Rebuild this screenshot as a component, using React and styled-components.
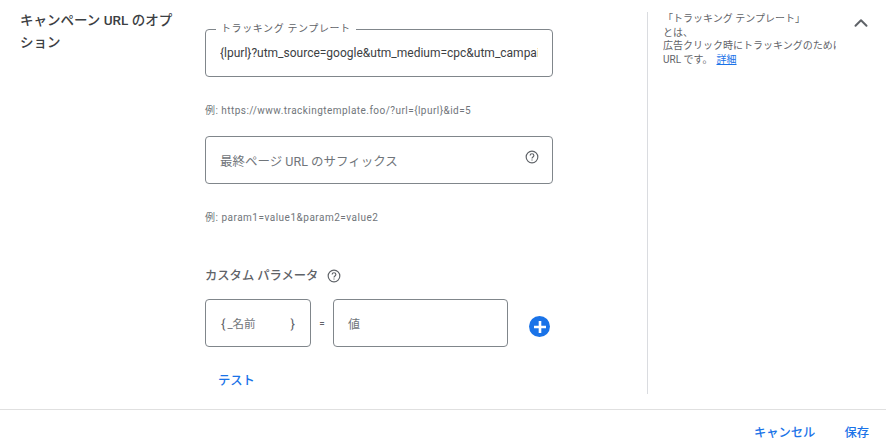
import React from "react";
import styled, { createGlobalStyle } from "styled-components";
import { ChevronUp } from "lucide-react";

const Global = createGlobalStyle`
  html, body { margin: 0; padding: 0; background: #fff; }
  body { font-family: Roboto, "Noto Sans CJK JP", sans-serif; color: #3c4043; }
`;

const Page = styled.div`
  width: 886px;
  height: 447px;
  overflow: hidden;
  display: flex;
  flex-direction: column;
  background: #fff;
`;

const Main = styled.main`
  height: 409px;
  display: grid;
  grid-template-columns: 205px 442px 1fr;
  box-sizing: border-box;
`;

const Title = styled.h2`
  margin: 0;
  padding: 9px 0 0 20px;
  font-size: 13.5px;
  line-height: 22px;
  font-weight: 500;
  color: #3c4043;
  width: 158px;
`;

const Form = styled.div`
  display: flex;
  flex-direction: column;
  padding-top: 29px;
  align-items: flex-start;
`;

const Field = styled.div`
  position: relative;
  box-sizing: border-box;
  width: ${p => p.$w || 348}px;
  height: 48px;
  border: 1px solid #80868b;
  border-radius: 4px;
  display: flex;
  align-items: center;
  padding: ${p => p.$pad || "0 14px"};
  font-size: ${p => p.$size || 12.5}px;
  color: ${p => (p.$muted ? "#70757a" : "#3c4043")};
  white-space: nowrap;
`;

const FloatLabel = styled.span`
  position: absolute;
  top: -8px;
  left: 10px;
  padding: 0 5px;
  background: #fff;
  font-size: 10px;
  line-height: 14px;
  color: #5f6368;
  letter-spacing: 0.6px;
`;

const Clip = styled.span`
  display: block;
  overflow: hidden;
  width: 100%;
`;

const Hint = styled.div`
  font-size: ${p => p.$size}px;
  letter-spacing: ${p => p.$spacing}px;
  line-height: 14px;
  color: #70757a;
  margin-top: 27px;
  margin-bottom: ${p => p.$bottom || 0}px;
`;

const HelpIcon = styled.svg`
  width: ${p => p.$s || 14}px;
  height: ${p => p.$s || 14}px;
  color: #5f6368;
  flex: none;
`;

const FieldHelp = styled.span`
  position: absolute;
  top: 13px;
  right: 13px;
  display: flex;
`;

const SectionLabel = styled.div`
  display: flex;
  align-items: center;
  gap: 9px;
  margin-top: 41px;
  font-size: 12.3px;
  line-height: 20px;
  color: #5f6368;
  font-weight: 500;
`;

const Row = styled.div`
  display: flex;
  align-items: center;
  margin-top: 13px;
`;

const Equals = styled.span`
  width: 22px;
  text-align: center;
  font-size: 10px;
  color: #5f6368;
`;

const Brace = styled.span`
  font-size: 13px;
  color: #5f6368;
`;

const NamePart = styled.span`
  flex: 1;
  font-size: 11.5px;
  color: #70757a;
  padding-left: 2px;
`;

const AddButton = styled.button`
  width: 21px;
  height: 21px;
  padding: 0;
  margin: 7px 0 0 21px;
  border: none;
  border-radius: 50%;
  background: #1a73e8;
  display: flex;
  align-items: center;
  justify-content: center;
`;

const TextButton = styled.button`
  border: none;
  background: none;
  padding: 0;
  font: 500 12.3px/18px Roboto, "Noto Sans CJK JP", sans-serif;
  color: #1a73e8;
  margin: ${p => p.$margin || 0};
`;

const Side = styled.aside`
  display: flex;
  height: 382px;
  margin-top: 12px;
  border-left: 1px solid #dadce0;
  padding-left: 15px;
`;

const HelpText = styled.div`
  width: 173px;
  overflow: hidden;
  white-space: nowrap;
  font-size: 10px;
  line-height: 13.6px;
  color: #5f6368;
`;

const Link = styled.a`
  color: #1a73e8;
  text-decoration: underline;
  margin-left: 4px;
`;

const Collapse = styled.span`
  display: flex;
  margin-left: 14px;
  color: #5f6368;
  height: 20px;
`;

const Footer = styled.footer`
  flex: 1;
  border-top: 1px solid #e0e0e0;
  display: flex;
  justify-content: flex-end;
  align-items: flex-start;
  gap: 29px;
  padding: 14px 17px 0 0;
`;

const Help = ({ s }) => (
  <HelpIcon $s={s} viewBox="0 0 24 24" fill="none" stroke="currentColor" strokeWidth="2">
    <circle cx="12" cy="12" r="10" />
    <path d="M8.8 9.6a3.2 3.2 0 0 1 6.4 0c0 2.2-3.2 2.4-3.2 4.8" />
    <path d="M12 16.2v2" />
  </HelpIcon>
);

export default function App() {
  return (
    <Page>
      <Global />
      <Main>
        <Title>キャンペーン URL のオプション</Title>
        <Form>
          <Field $size={12}>
            <FloatLabel>トラッキング テンプレート</FloatLabel>
            <Clip>{"{lpurl}?utm_source=google&utm_medium=cpc&utm_campaign={campaignid}"}</Clip>
          </Field>
          <Hint $size={10} $spacing={0.46} $bottom={18}>例: https://www.trackingtemplate.foo/?url={"{lpurl}"}&amp;id=5</Hint>
          <Field $muted>
            <span>最終ページ URL のサフィックス</span>
            <FieldHelp><Help s={14} /></FieldHelp>
          </Field>
          <Hint $size={10} $spacing={0.5}>例: param1=value1&amp;param2=value2</Hint>
          <SectionLabel>カスタム パラメータ <Help s={14} /></SectionLabel>
          <Row>
            <Field $w={106} $pad="0 15px 0 15px">
              <Brace>{"{"}</Brace>
              <NamePart>_名前</NamePart>
              <Brace>{"}"}</Brace>
            </Field>
            <Equals>=</Equals>
            <Field $w={175} $muted $size={12}>値</Field>
            <AddButton aria-label="追加">
              <svg width="14" height="14" viewBox="0 0 14 14" fill="none" stroke="#fff" strokeWidth="2.6">
                <path d="M7 1v12M1 7h12" />
              </svg>
            </AddButton>
          </Row>
          <TextButton $margin="25px 0 0 13px">テスト</TextButton>
        </Form>
        <Side>
          <HelpText>
            「トラッキング テンプレート」<br />
            とは、<br />
            広告クリック時にトラッキングのために使用される<br />
            URL です。<Link>詳細</Link>
          </HelpText>
          <Collapse><ChevronUp size={22} strokeWidth={2.2} /></Collapse>
        </Side>
      </Main>
      <Footer>
        <TextButton>キャンセル</TextButton>
        <TextButton>保存</TextButton>
      </Footer>
    </Page>
  );
}
